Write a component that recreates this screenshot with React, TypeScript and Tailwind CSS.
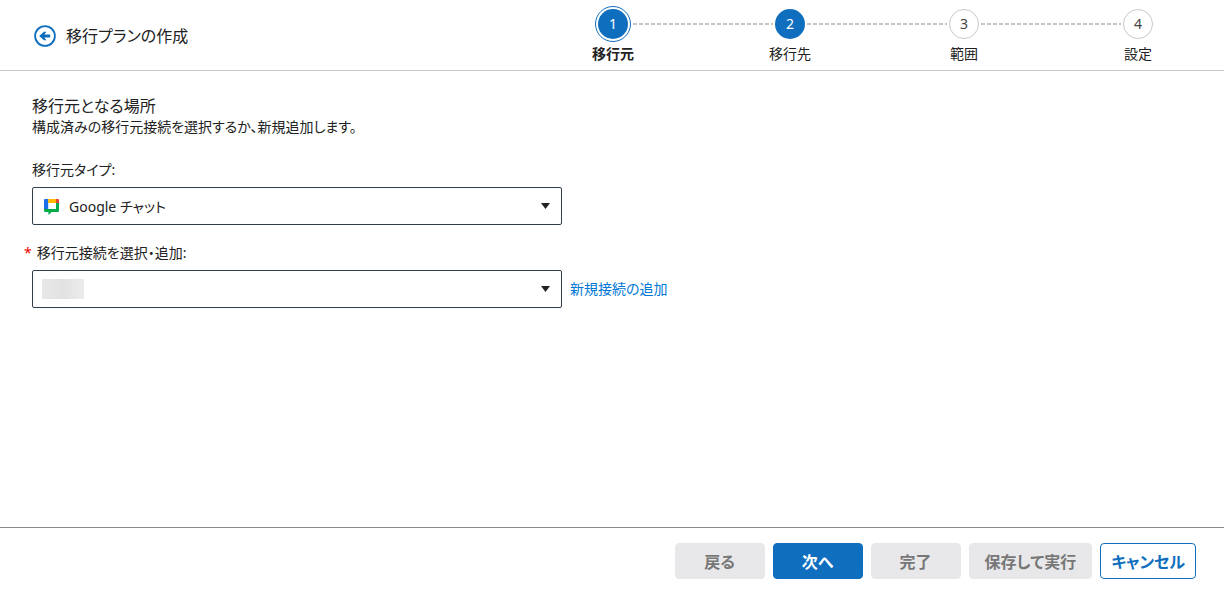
import { Fragment, ReactNode } from "react";
import clsx from "clsx";

const steps = ["移行元", "移行先", "範囲", "設定"];

function StepNumber({ index }: { index: number }) {
  if (index === 0) {
    return (
      <span className="flex size-9 items-center justify-center rounded-full border border-[#106ebe] p-0.5">
        <span className="flex size-full items-center justify-center rounded-full bg-[#106ebe] text-white">1</span>
      </span>
    );
  }
  return (
    <span
      className={clsx(
        "flex size-[30px] items-center justify-center rounded-full",
        index === 1 ? "bg-[#106ebe] text-white" : "border border-[#c8c8c8] bg-white text-[#444444]"
      )}
    >
      {index + 1}
    </span>
  );
}

function Stepper() {
  return (
    <ol className="flex max-w-[558px] flex-1 items-start pt-1.5">
      {steps.map((label, i) => (
        <Fragment key={label}>
          {i > 0 && (
            <li aria-hidden="true" className="flex h-9 flex-1 items-center px-0.5">
              <svg className="h-0.5 w-full" fill="none">
                <line x1="0" y1="1" x2="100%" y2="1" stroke="#c4c4c4" strokeWidth="2" strokeDasharray="4 2" />
              </svg>
            </li>
          )}
          <li
            aria-current={i === 0 ? "step" : undefined}
            className={clsx("flex flex-col items-center", i === 0 ? "w-9" : "w-[30px]")}
          >
            <span className="flex h-9 items-center">
              <StepNumber index={i} />
            </span>
            <span className={clsx("mt-0.5 leading-5 whitespace-nowrap", i === 0 && "font-bold")}>{label}</span>
          </li>
        </Fragment>
      ))}
    </ol>
  );
}

function BackIcon() {
  return (
    <svg viewBox="0 0 22 22" className="size-[22px]" fill="none">
      <circle cx="11" cy="11" r="9.9" stroke="#106ebe" strokeWidth="1.8" />
      <path d="M5.2 11 L10 6.8 H12.4 L10.4 9.6 H16.2 V12.4 H10.4 L12.4 15.2 H10 Z" fill="#106ebe" />
    </svg>
  );
}

function ChatIcon() {
  return (
    <svg viewBox="0 0 16 17" className="h-[17px] w-4">
      <path d="M1.2 1H4.2V11H0V2.2C0 1.5.5 1 1.2 1Z" fill="#1a6fe8" />
      <path d="M4.2 1H12V5H4.2Z" fill="#ffba00" />
      <path d="M12 1h1.8C14.5 1 15 1.5 15 2.2V5H12Z" fill="#ea4335" />
      <path d="M12 5H15V12.8c0 .7-.5 1.2-1.2 1.2H7.6L5.2 16.4c-.3.3-.8.1-.8-.4V14H1.2C.5 14 0 13.5 0 12.8V11H12Z" fill="#00ac47" />
    </svg>
  );
}

type SelectBoxProps = { id: string; adornment: ReactNode; options: string[]; required?: boolean };

function SelectBox({ id, adornment, options, required }: SelectBoxProps) {
  return (
    <div className="relative w-full max-w-[530px]">
      <select
        id={id}
        required={required}
        className="block h-[38px] w-full appearance-none rounded-xs border border-[#323f4b] bg-white pt-px pr-8 pl-9 text-[#222222]"
      >
        {options.map((o) => (
          <option key={o}>{o}</option>
        ))}
      </select>
      <span className="pointer-events-none absolute inset-y-0 left-0 flex items-center">{adornment}</span>
      <span className="pointer-events-none absolute inset-y-0 right-3 flex items-center">
        <svg viewBox="0 0 9 6" className="h-1.5 w-[9px]">
          <path d="M0 0H9L4.5 6Z" fill="#222222" />
        </svg>
      </span>
    </div>
  );
}

type ActionProps = { children: ReactNode; tone?: "muted" | "primary" | "outline" };

function Action({ children, tone = "muted" }: ActionProps) {
  return (
    <button
      type="button"
      disabled={tone === "muted"}
      className={clsx(
        "h-9 min-w-[90px] rounded-sm border pt-0.5 text-base leading-6 font-bold whitespace-nowrap",
        tone === "muted" && "border-[#e8e8ea] bg-[#e8e8ea] px-[15px] text-[#777777]",
        tone === "primary" && "border-[#106ebe] bg-[#106ebe] px-[15px] text-white",
        tone === "outline" && "border-[#106ebe] bg-white px-2.5 text-[#106ebe]"
      )}
    >
      {children}
    </button>
  );
}

export default function App() {
  return (
    <div
      lang="ja"
      className="flex min-h-screen flex-col bg-white font-['Noto_Sans','Noto_Sans_CJK_JP',sans-serif] text-sm text-[#222222] [font-feature-settings:'palt']"
    >
      <header className="flex justify-between border-b border-[#c8c8c8] pr-[71px] pb-1.5 pl-[34px]">
        <div className="flex items-center gap-2.5 pt-2">
          <button type="button" aria-label="戻る">
            <BackIcon />
          </button>
          <h1 className="text-base leading-6">移行プランの作成</h1>
        </div>
        <Stepper />
      </header>

      <main className="flex-1 px-8 pt-6">
        <h2 className="text-base leading-[22px]">移行元となる場所</h2>
        <p className="leading-5">構成済みの移行元接続を選択するか、新規追加します。</p>

        <label htmlFor="source-type" className="mt-[23px] mb-[7px] block leading-5">
          移行元タイプ:
        </label>
        <SelectBox
          id="source-type"
          options={["Google チャット"]}
          adornment={
            <span className="pl-3">
              <ChatIcon />
            </span>
          }
        />

        <label htmlFor="connection" className="mt-[18px] mb-[7px] -ml-2 flex gap-[5px] leading-5">
          <span className="text-[#f00000]">*</span>
          移行元接続を選択・追加:
        </label>
        <div className="flex items-center gap-2">
          <SelectBox
            id="connection"
            required
            options={[""]}
            adornment={<span className="ml-2.5 h-5 w-[42px] bg-linear-to-r from-[#e8e8e8] via-[#e2e2e2] to-[#ececec]" />}
          />
          <a href="#" className="whitespace-nowrap text-[#0078d4]">
            新規接続の追加
          </a>
        </div>
      </main>

      <footer className="flex justify-end gap-2 border-t border-[#8a8a8a] pt-[15px] pr-7 pb-[19px]">
        <Action>戻る</Action>
        <Action tone="primary">次へ</Action>
        <Action>完了</Action>
        <Action>保存して実行</Action>
        <Action tone="outline">キャンセル</Action>
      </footer>
    </div>
  );
}
